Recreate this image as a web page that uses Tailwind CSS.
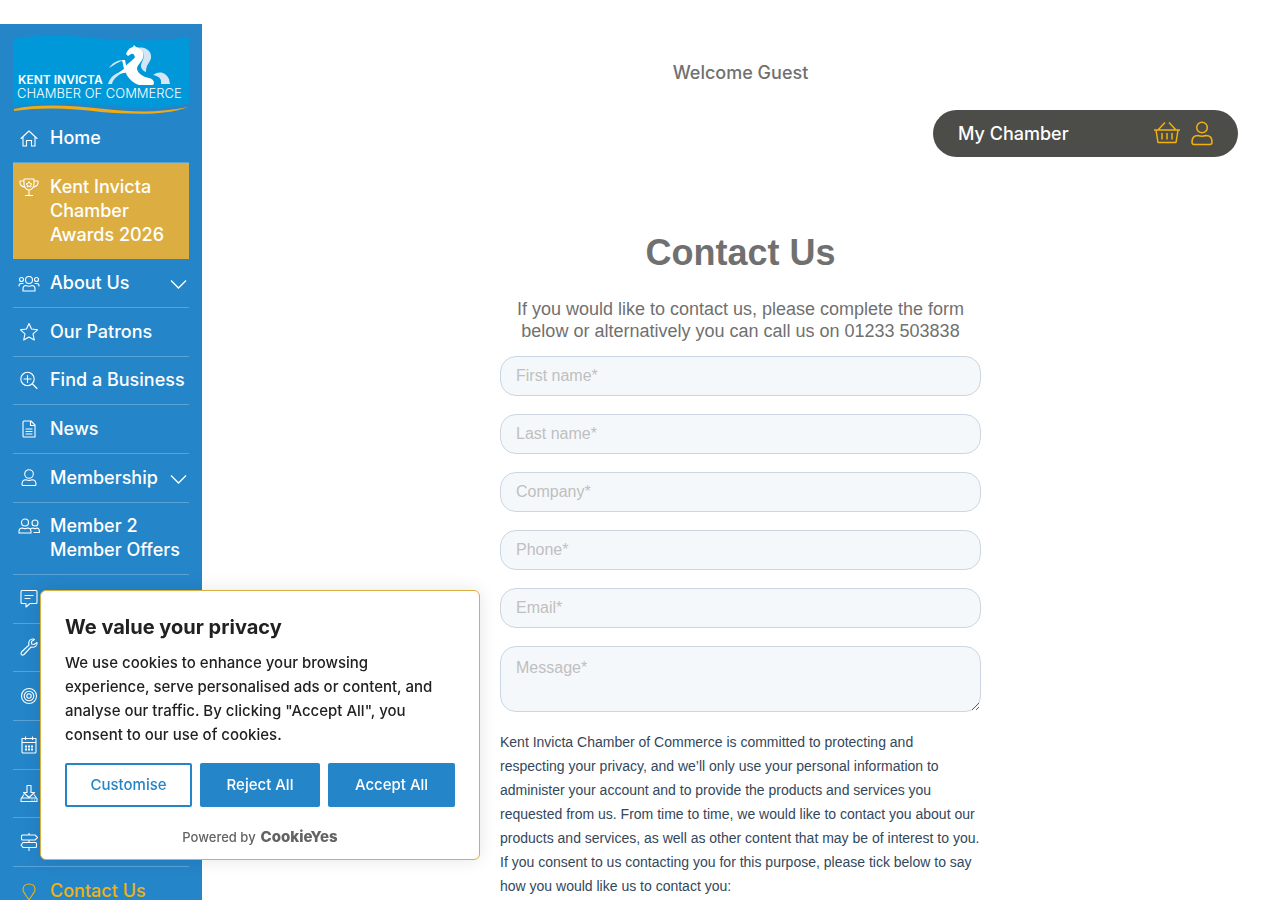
<!DOCTYPE html>
<html lang="en">
<head>
    <meta charset="UTF-8">
    <meta name="viewport" content="width=device-width, initial-scale=1.0">
    <script src="https://cdn.jsdelivr.net/npm/@tailwindcss/browser@4"></script>

    <title>Contact Us | Kent Invicta Chamber of Commerce</title>
</head>
<body class="bg-white font-['Inter',sans-serif]">
    <div class="flex h-screen overflow-hidden pt-6">
        <!-- Sidebar -->
        <aside class="w-[202px] shrink-0 bg-[#2585c9] px-[13px] pt-[11px] text-white">
            <a href="#" class="block" aria-label="Kent Invicta Chamber of Commerce">
                <svg class="block w-full" viewBox="0 0 176 79" fill="none">
                    <path d="M0 4C20 0 45 0 72 2C110 6 145 7 176 2V68C145 76 115 72 84 70C52 68 25 69 0 71Z" fill="#0098d9"/>
                    <path d="M1 74C28 68 62 71 92 74C124 78 150 77 175 72C152 81 118 79 88 77C58 73 28 72 1 76Z" fill="#f0ac12"/>
                    <path d="M121 10L123 12C129 13 132 18 130 23C128 28 124 30 124 34C125 39 131 42 136 43C141 44 142 48 140 50H126C119 48 112 40 112 34C112 29 120 26 122 22C121 19 120 18 118 19L115 21L113 19C115 15 116 13 120 12Z" fill="#fff"/>
                    <path d="M125 13C133 11 139 17 138 23C137 28 133 29 133 37C128 35 127 31 129 27C132 21 132 16 125 13Z" fill="#d3e6f6"/>
                    <path d="M96 33C99 28 104 25 111 25C107 27 103 28 101 30Z" fill="#d3e6f6"/>
                    <path d="M109 25H112L113 30L116 36C111 39 106 38 103 41L105 38L111 34Z" fill="#fff"/>
                    <path d="M105 38C100 40 97 43 95 49H99C100 45 102 43 107 39Z" fill="#d3e6f6"/>
                    <path d="M140 40C147 35 153 38 156 44L157 49H148C149 44 146 41 140 40Z" fill="#d3e6f6"/>
                    <text x="5" y="49" font-family="Inter, sans-serif" font-size="12" font-weight="600" fill="#fff">KENT INVICTA</text>
                    <text x="4" y="63" font-family="Inter, sans-serif" font-size="13" font-weight="300" fill="#fff">CHAMBER OF COMMERCE</text>
                </svg>
            </a>
            <nav>
                <ul class="text-[18px] leading-6 font-medium">
                    <li class="border-b border-[#5aa3d7]">
                        <a href="#" class="flex gap-[5px] py-3">
                            <span class="flex w-8 shrink-0 justify-center"><svg class="mt-px size-[22px]" viewBox="0 0 22 22" fill="none" stroke="currentColor" stroke-width="1.1" stroke-linejoin="round" stroke-linecap="round"><path d="M3 11.500L11 4L19 11.500M5 10V19H8.500V13.500H13.500V19H17V10"/></svg></span>
                            <span>Home</span>
                        </a>
                    </li>
                    <li class="bg-[#dcae42]">
                        <a href="#" class="flex gap-[5px] py-3">
                            <span class="flex w-8 shrink-0 justify-center"><svg class="mt-px size-[22px]" viewBox="0 0 22 22" fill="none" stroke="currentColor" stroke-width="1.1" stroke-linejoin="round"><path d="M6 3H16V8C16 11 14 14 11 14S6 11 6 8ZM6 5H2V7C2 9 4 11 7 11M16 5H20V7C20 9 18 11 15 11M11 14V19M7 19.500H15"/><path d="M11 5.500L12 7.500L14 8L12.500 9L13 11L11 10L9 11L9.500 9L8 8L10 7.500Z" stroke-width="1"/></svg></span>
                            <span>Kent Invicta Chamber Awards 2026</span>
                        </a>
                    </li>
                    <li class="border-b border-[#5aa3d7]">
                        <a href="#" class="flex gap-[5px] py-3">
                            <span class="flex w-8 shrink-0 justify-center"><svg class="mt-[2px] size-[22px]" viewBox="0 0 22 22" fill="none" stroke="currentColor" stroke-width="1.1" stroke-linejoin="round" stroke-linecap="round"><circle cx="11" cy="7" r="3.500"/><circle cx="3.500" cy="6.500" r="2"/><circle cx="18.500" cy="6.500" r="2"/><path d="M5 18V16C5 13.500 6.500 12.500 8 12.500C10 13.500 12 13.500 14 12.500C15.500 12.500 17 13.500 17 16V18ZM1 13C1 11 2 10.500 3 10.500H5M21 13C21 11 20 10.500 19 10.500H17"/></svg></span>
                            <span class="flex-1">About Us</span>
                            <svg class="mt-[2px] mr-[2px] size-[17px] self-center" viewBox="0 0 17 17" fill="none" stroke="currentColor" stroke-width="1.300"><path d="M1 4.500L8.500 12L16 4.500"/></svg>
                        </a>
                    </li>
                    <li class="border-b border-[#5aa3d7]">
                        <a href="#" class="flex gap-[5px] py-3">
                            <span class="flex w-8 shrink-0 justify-center"><svg class="mt-px size-[22px]" viewBox="0 0 22 22" fill="none" stroke="currentColor" stroke-width="1.1" stroke-linejoin="round"><path d="M11 2.500L13.500 8L19.500 8.800L15 12.800L16.300 19L11 16L5.700 19L7 12.800L2.500 8.800L8.500 8Z"/></svg></span>
                            <span>Our Patrons</span>
                        </a>
                    </li>
                    <li class="border-b border-[#5aa3d7]">
                        <a href="#" class="flex gap-[5px] pt-[11px] pb-3">
                            <span class="flex w-8 shrink-0 justify-center"><svg class="mt-px size-[22px]" viewBox="0 0 22 22" fill="none" stroke="currentColor" stroke-width="1.1" stroke-linecap="round"><circle cx="9.500" cy="10" r="6.700"/><path d="M14.500 15L19 19.500M6 10H13M9.500 6.500V13.500"/></svg></span>
                            <span class="whitespace-nowrap">Find a Business</span>
                        </a>
                    </li>
                    <li class="border-b border-[#5aa3d7]">
                        <a href="#" class="flex gap-[5px] py-3">
                            <span class="flex w-8 shrink-0 justify-center"><svg class="mt-px size-[22px]" viewBox="0 0 22 22" fill="none" stroke="currentColor" stroke-width="1.1" stroke-linejoin="round" stroke-linecap="round"><path d="M6 3H13L17 7V19H6Q5 19 5 18V4Q5 3 6 3ZM12.500 3V7.500H17M8 11H14M8 13.500H14M8 16H14"/></svg></span>
                            <span>News</span>
                        </a>
                    </li>
                    <li class="border-b border-[#5aa3d7]">
                        <a href="#" class="flex gap-[5px] py-3">
                            <span class="flex w-8 shrink-0 justify-center"><svg class="mt-px size-[22px]" viewBox="0 0 22 22" fill="none" stroke="currentColor" stroke-width="1.1"><circle cx="11" cy="7" r="4.300"/><path d="M4 17.500C4 14 5.500 12.800 8 12.800C10 13.600 12 13.600 14 12.800C16.500 12.800 18 14 18 17.500Q18 18.500 17 18.500H5Q4 18.500 4 17.500Z"/></svg></span>
                            <span class="flex-1">Membership</span>
                            <svg class="mt-[2px] mr-[2px] size-[17px] self-center" viewBox="0 0 17 17" fill="none" stroke="currentColor" stroke-width="1.300"><path d="M1 4.500L8.500 12L16 4.500"/></svg>
                        </a>
                    </li>
                    <li class="border-b border-[#5aa3d7]">
                        <a href="#" class="flex gap-[5px] pt-[11px] pb-3">
                            <span class="flex w-8 shrink-0 justify-center"><svg class="mt-[2px] size-[22px]" viewBox="0 0 22 22" fill="none" stroke="currentColor" stroke-width="1.1" stroke-linecap="round"><circle cx="7" cy="6.500" r="3.500"/><circle cx="17" cy="7" r="3"/><path d="M1 17V15.500C1 13 2.500 12 4.500 12C6 12.800 8 12.800 9.500 12C12 12 13 13.500 13 15.500V17ZM13 12.500L15 12C16 12.600 18 12.600 19 12C20.500 12 21.500 13.500 21.500 16.500H16"/></svg></span>
                            <span class="whitespace-nowrap">Member 2<br>Member Offers</span>
                        </a>
                    </li>
                    <li class="border-b border-[#5aa3d7]">
                        <a href="#" aria-label="Messages" class="flex gap-[5px] py-3">
                            <span class="flex h-6 w-8 shrink-0 justify-center"><svg class="mt-px size-[22px]" viewBox="0 0 22 22" fill="none" stroke="currentColor" stroke-width="1.1" stroke-linejoin="round" stroke-linecap="round"><path d="M4 2.500H18Q19 2.500 19 3.500V14.500Q19 15.500 18 15.500H12L8 19V15.500H4Q3 15.500 3 14.500V3.500Q3 2.500 4 2.500ZM7 7.500H15M7 10.500H12"/></svg></span>
                        </a>
                    </li>
                    <li class="border-b border-[#5aa3d7]">
                        <a href="#" aria-label="Services" class="flex gap-[5px] pt-[11px] pb-3">
                            <span class="flex h-6 w-8 shrink-0 justify-center"><svg class="mt-px size-[22px]" viewBox="0 0 22 22" fill="none" stroke="currentColor" stroke-width="1.1" stroke-linejoin="round"><path d="M15.500 3C12 2.500 10 5.500 11 9L3.500 16C2 18 4 20 6 18.500L13 11C17 12 20 9 19 6.500L16 8.500L13.500 8L13.500 5.500L16.500 3.500Z"/></svg></span>
                        </a>
                    </li>
                    <li class="border-b border-[#5aa3d7]">
                        <a href="#" aria-label="Policy" class="flex gap-[5px] py-3">
                            <span class="flex h-6 w-8 shrink-0 justify-center"><svg class="mt-px size-[22px]" viewBox="0 0 22 22" fill="none" stroke="currentColor" stroke-width="1.1"><circle cx="11" cy="11" r="7.500"/><circle cx="11" cy="11" r="4.800"/><circle cx="11" cy="11" r="2.200"/></svg></span>
                        </a>
                    </li>
                    <li class="border-b border-[#5aa3d7]">
                        <a href="#" aria-label="Events" class="flex gap-[5px] py-3">
                            <span class="flex h-6 w-8 shrink-0 justify-center"><svg class="mt-px size-[22px]" viewBox="0 0 22 22" fill="none" stroke="currentColor" stroke-width="1.1" stroke-linejoin="round"><path d="M4 4.500H18V18Q18 19 17 19H5Q4 19 4 18ZM4 8.500H18M7.500 2.500V6M14.500 2.500V6"/><path d="M7 12.500H15M7 15.500H15" stroke-width="2" stroke-dasharray="2 1"/></svg></span>
                        </a>
                    </li>
                    <li class="border-b border-[#5aa3d7]">
                        <a href="#" aria-label="Downloads" class="flex gap-[5px] pt-[11px] pb-3">
                            <span class="flex h-6 w-8 shrink-0 justify-center"><svg class="mt-[2px] size-[22px]" viewBox="0 0 22 22" fill="none" stroke="currentColor" stroke-width="1.1" stroke-linejoin="round"><path d="M9 2.500H13V9.500H16.500L11 14.500L5.500 9.500H9ZM6 11.500L3.500 15H18.500L16 11.500M3.500 15Q3 15 3 16V18.500H19V16Q19 15 18.500 15M13.500 17H14.500M16 17H17"/></svg></span>
                        </a>
                    </li>
                    <li class="border-b border-[#5aa3d7]">
                        <a href="#" aria-label="Training" class="flex gap-[5px] py-3">
                            <span class="flex h-6 w-8 shrink-0 justify-center"><svg class="mt-px size-[22px]" viewBox="0 0 22 22" fill="none" stroke="currentColor" stroke-width="1.1" stroke-linejoin="round"><path d="M4.500 4H17L19.500 6.500L17 9H4.500Q3.500 9 3.500 8V5Q3.500 4 4.500 4ZM5 11.500H17.500Q18.500 11.500 18.500 12.500V15.500Q18.500 16.500 17.500 16.500H5L3 14ZM11 2V4M11 9V11.500M11 16.500V20"/></svg></span>
                        </a>
                    </li>
                    <li>
                        <a href="#" class="flex gap-[5px] py-3 text-[#f2b20c]">
                            <span class="flex w-8 shrink-0 justify-center"><svg class="mt-[2px] size-[22px]" viewBox="0 0 22 22" fill="none" stroke="currentColor" stroke-width="1.1"><path d="M11 19C8 14 5 11.500 5 8.500C5 5 7.500 3 11 3S17 5 17 8.500C17 11.500 14 14 11 19Z"/></svg></span>
                            <span>Contact Us</span>
                        </a>
                    </li>
                </ul>
            </nav>
        </aside>

        <!-- Page content -->
        <main class="flex-1 pr-px">
            <p class="pt-[37px] text-center text-[18px] leading-6 font-medium text-[#707070]">Welcome Guest</p>
            <div class="mt-[25px] mr-[41px] ml-auto flex h-[47px] w-[305px] items-center rounded-full bg-[#4c4c49] px-[25px]">
                <a href="#" class="flex-1 text-[18px] font-medium text-white">My Chamber</a>
                <a href="#" aria-label="Basket" class="mr-[10px] text-[#f2b20c]"><svg class="block size-7" viewBox="0 0 28 28" fill="none" stroke="currentColor" stroke-width="1.500" stroke-linejoin="round"><path d="M1 10H27M3 10L5 22.500H23L25 10M5 10L12 2.500M23 10L16 2.500M9 13V19.500M14 13V19.500M19 13V19.500"/></svg></a>
                <a href="#" aria-label="Account" class="text-[#f2b20c]"><svg class="block h-[26px] w-[22px]" viewBox="0 0 22 26" fill="none" stroke="currentColor" stroke-width="1.500"><circle cx="11" cy="6.500" r="5.300"/><path d="M1 21C1 16.500 3 14.500 7 14.500C10 15.500 12 15.500 15 14.500C19 14.500 21 16.500 21 21Q21 23.500 19 23.500H3Q1 23.500 1 21Z"/></svg></a>
            </div>

            <div class="mx-auto mt-[74px] w-[481px] font-['Liberation_Sans',Arial,sans-serif]">
                <h1 class="text-center text-[36px] leading-[44px] font-bold text-[#707070]">Contact Us</h1>
                <p class="mt-[23px] text-center text-[18px] leading-[22px] text-[#707070]">If you would like to contact us, please complete the form below or alternatively you can call us on 01233 503838</p>
                <form class="mt-[14px] flex flex-col gap-[18px]">
                    <input type="text" aria-label="First name" placeholder="First name*" class="h-10 rounded-2xl border border-[#cbd6e2] bg-[#f5f8fa] px-[15px] text-base placeholder:text-[#bfbfbf]">
                    <input type="text" aria-label="Last name" placeholder="Last name*" class="h-10 rounded-2xl border border-[#cbd6e2] bg-[#f5f8fa] px-[15px] text-base placeholder:text-[#bfbfbf]">
                    <input type="text" aria-label="Company" placeholder="Company*" class="h-10 rounded-2xl border border-[#cbd6e2] bg-[#f5f8fa] px-[15px] text-base placeholder:text-[#bfbfbf]">
                    <input type="tel" aria-label="Phone" placeholder="Phone*" class="h-10 rounded-2xl border border-[#cbd6e2] bg-[#f5f8fa] px-[15px] text-base placeholder:text-[#bfbfbf]">
                    <input type="email" aria-label="Email" placeholder="Email*" class="h-10 rounded-2xl border border-[#cbd6e2] bg-[#f5f8fa] px-[15px] text-base placeholder:text-[#bfbfbf]">
                    <textarea aria-label="Message" placeholder="Message*" class="h-[66px] resize rounded-2xl border border-[#cbd6e2] bg-[#f5f8fa] px-[15px] py-[9px] text-base placeholder:text-[#bfbfbf]"></textarea>
                    <p class="text-sm leading-6 text-[#33475b]">Kent Invicta Chamber of Commerce is committed to protecting and respecting your privacy, and we’ll only use your personal information to administer your account and to provide the products and services you requested from us. From time to time, we would like to contact you about our products and services, as well as other content that may be of interest to you. If you consent to us contacting you for this purpose, please tick below to say how you would like us to contact you:</p>
                </form>
            </div>
        </main>
    </div>

    <!-- Cookie banner -->
    <section class="fixed bottom-10 left-10 w-[440px] rounded-md border border-[#dcae42] bg-white px-6 pt-6 pb-3 font-medium text-[#212121] shadow-[0_0_18px_rgba(0,0,0,0.1)]">
        <h2 class="text-xl leading-6 font-bold">We value your privacy</h2>
        <p class="mt-3 text-[15px] leading-6">We use cookies to enhance your browsing experience, serve personalised ads or content, and analyse our traffic. By clicking "Accept All", you consent to our use of cookies.</p>
        <div class="mt-4 flex gap-2 text-[15px]">
            <button class="h-11 w-[127px] rounded-xs border-2 border-[#2585c9] text-[#2585c9]">Customise</button>
            <button class="h-11 flex-1 rounded-xs bg-[#2585c9] text-white">Reject All</button>
            <button class="h-11 w-[127px] rounded-xs bg-[#2585c9] text-white">Accept All</button>
        </div>
        <div class="mt-5 flex items-center justify-center gap-[5px] leading-5 text-[#636363]">
            <span class="text-[13px]">Powered by</span>
            <a href="#" class="text-[15px] leading-5 font-extrabold">CookieYes</a>
        </div>
    </section>
</body>
</html>
